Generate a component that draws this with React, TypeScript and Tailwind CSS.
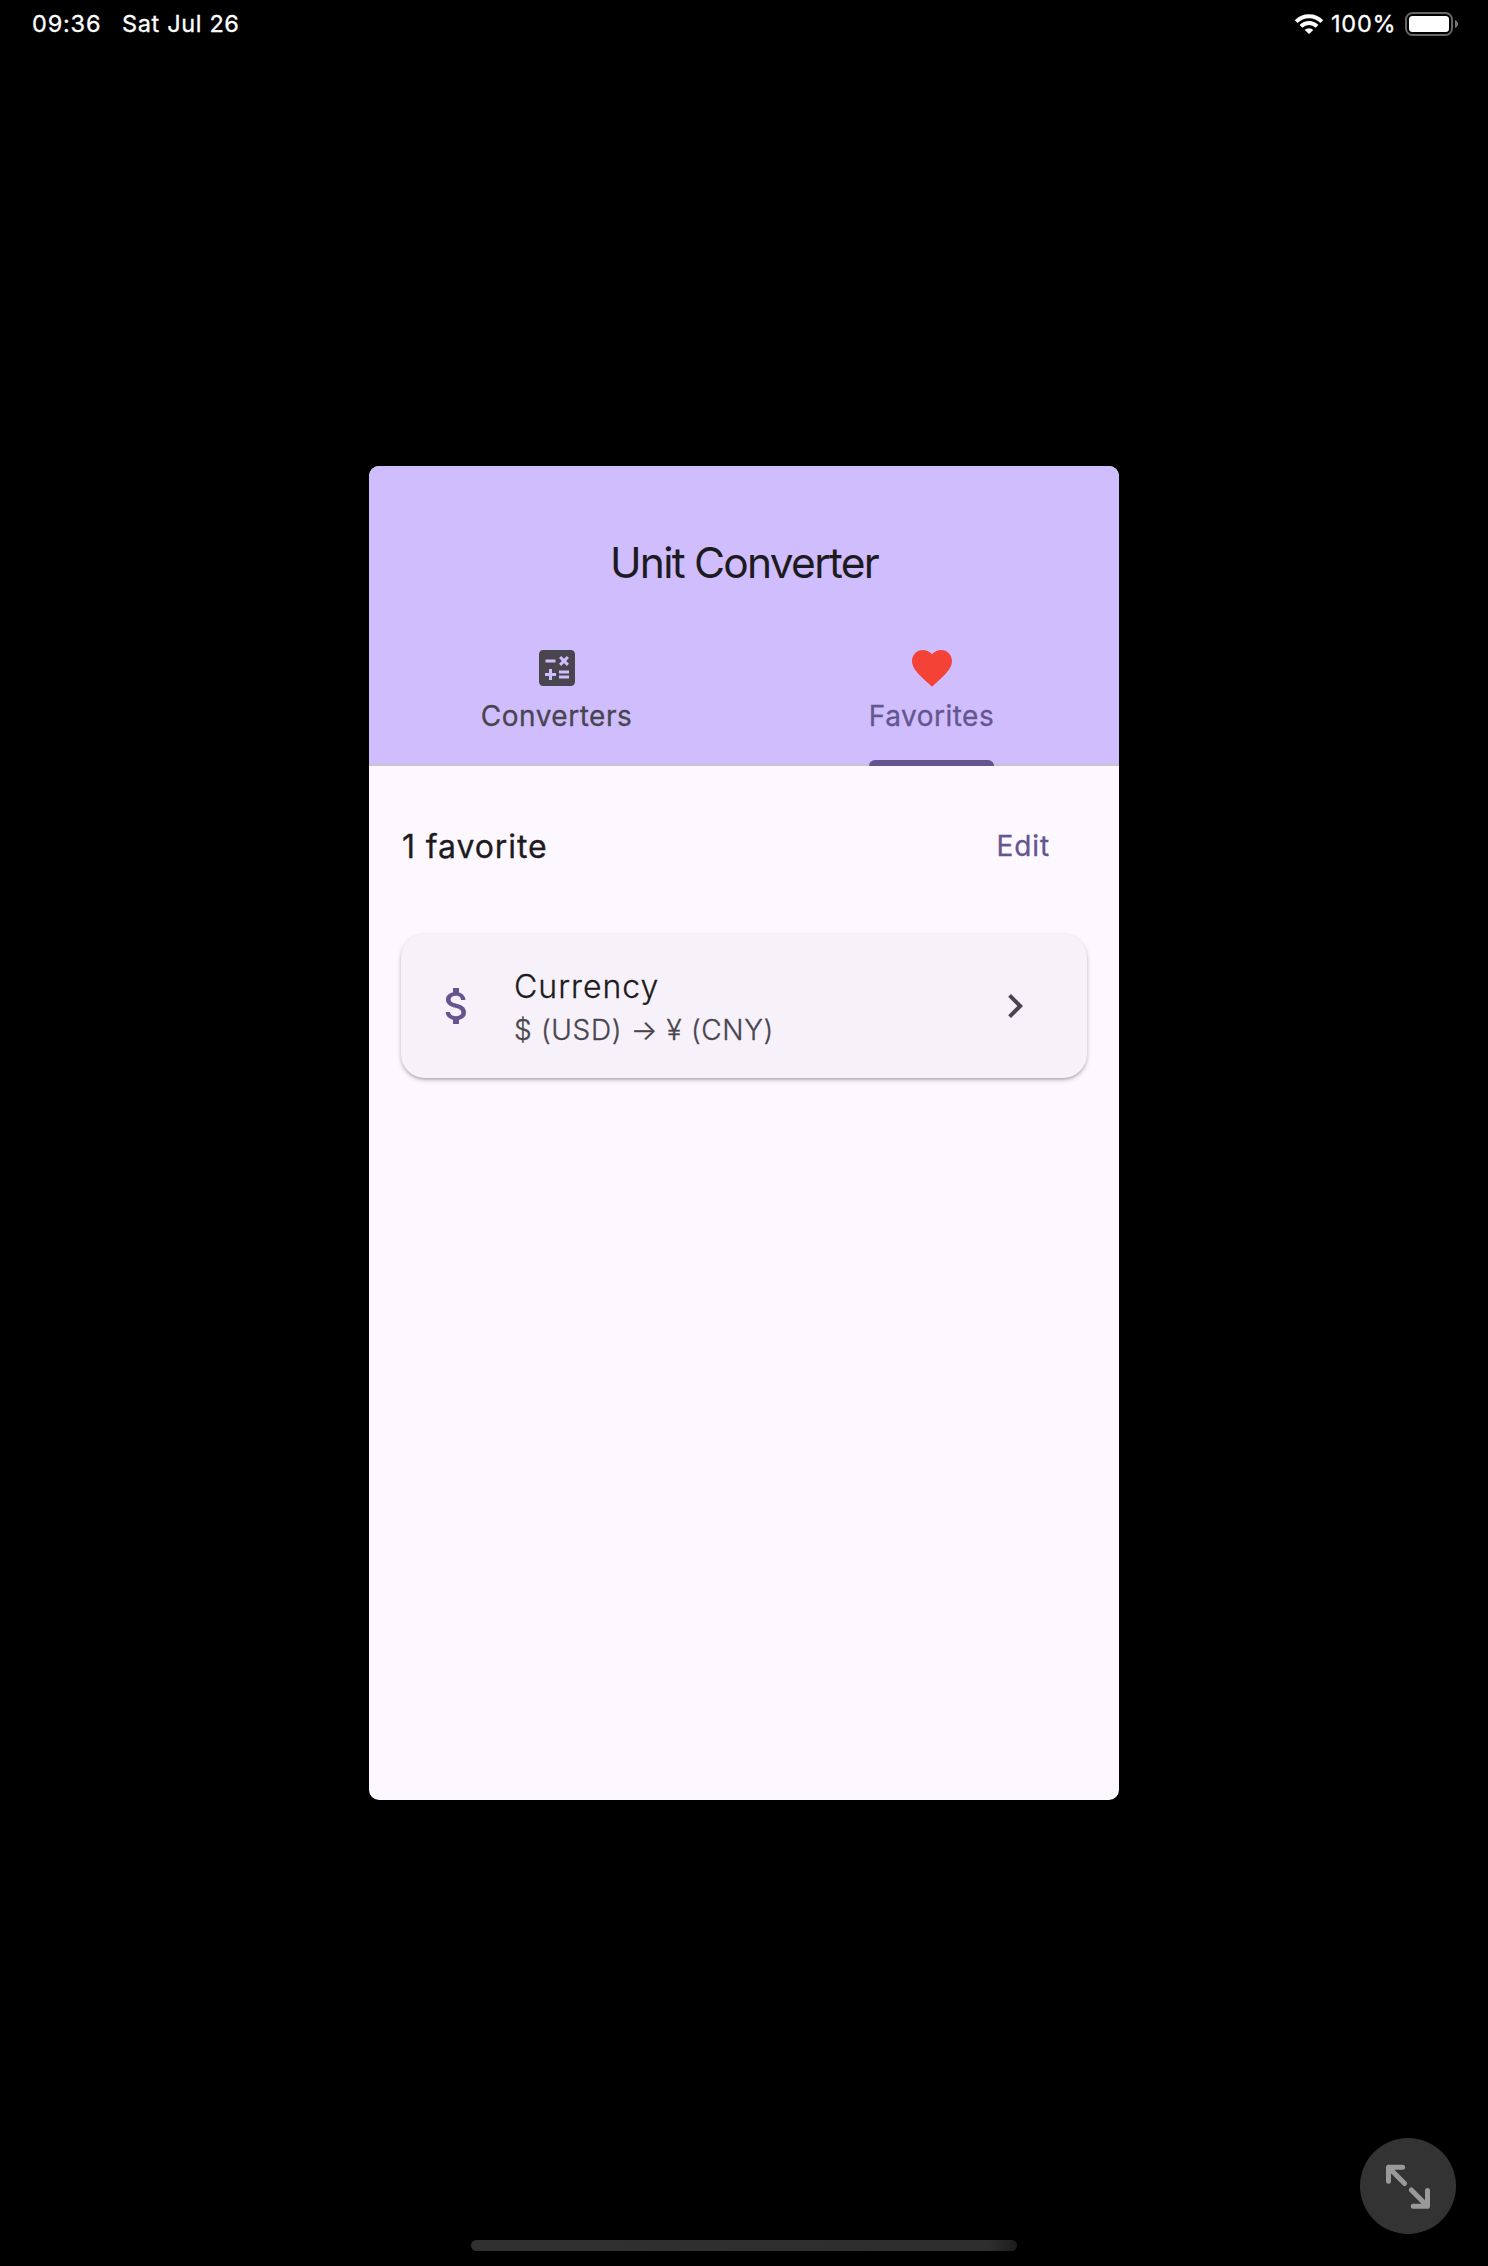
import React from "react";
import { MdAttachMoney, MdCalculate, MdChevronRight, MdFavorite } from "react-icons/md";

function WifiIcon() {
  return (
    <svg className="mt-[13px] h-[22px] w-[30px]" viewBox="0 0 30 22" fill="none" stroke="white" strokeWidth="4">
      <path d="M2.2 8.6 A18.2 18.2 0 0 1 27.8 8.6" />
      <path d="M7 13.4 A11.4 11.4 0 0 1 23 13.4" />
      <path d="M15 21 L10.7 16.9 A6.2 6.2 0 0 1 19.3 16.9 Z" fill="white" stroke="none" />
    </svg>
  );
}

function BatteryIcon() {
  return (
    <svg className="ml-2 mt-3 h-6 w-[53px]" viewBox="0 0 53 24">
      <rect x="1" y="1" width="46" height="22" rx="6.5" fill="none" stroke="#666" strokeWidth="2" />
      <rect x="4" y="4" width="40" height="16" rx="3.5" fill="white" />
      <path d="M50 8 C54 9.5 54 14.5 50 16 Z" fill="#777" />
    </svg>
  );
}

function StatusBar() {
  return (
    <header className="flex h-12 items-start justify-between pl-8 pr-[30px] text-[23.5px] leading-[47px] text-white [-webkit-text-stroke:0.3px]">
      <div className="flex">
        <span className="w-[90px] tracking-[0.8px]">09:36</span>
        <span className="tracking-[0.65px]">Sat Jul 26</span>
      </div>
      <div className="flex items-start">
        <WifiIcon />
        <span className="ml-[7px] w-[66px] whitespace-nowrap tracking-[0.8px]">100%</span>
        <BatteryIcon />
      </div>
    </header>
  );
}

function FavoriteCard() {
  return (
    <div className="mx-8 mt-14 flex h-36 items-center rounded-3xl bg-[#f7f2fa] pl-8 pr-12 shadow-[0_2px_4px_rgba(0,0,0,0.26),0_2px_2px_-1px_rgba(0,0,0,0.12)]">
      <MdAttachMoney className="size-12 text-[#65558f]" />
      <div className="ml-[33px] flex-1 font-light [-webkit-text-stroke:0.3px]">
        <div className="pt-px text-[32px] leading-[47px] tracking-[1px] text-[#1d1b20]">Currency</div>
        <div className="text-[28px] leading-10 tracking-[0.66px] text-[#49454f]">$ (USD) → ¥ (CNY)</div>
      </div>
      <MdChevronRight className="size-12 text-[#49454f]" />
    </div>
  );
}

export default function App() {
  return (
    <div className="flex h-[2266px] w-[1488px] flex-col bg-black font-['Inter',sans-serif]">
      <StatusBar />

      <main className="mx-auto mt-[418px] h-[1334px] w-[750px] overflow-hidden rounded-[10px] bg-[#fdf7ff]">
        <div className="flex h-[300px] flex-col bg-[#cfbdfe] pt-10 shadow-[inset_0_-2px_0_#cac4d0]">
          <h1 className="flex h-28 items-center justify-center pt-px text-[42.5px] font-normal leading-[56px] tracking-[-1.75px] text-[#1d1b20]">
            Unit Converter
          </h1>
          <nav className="grid h-[148px] grid-cols-2 [-webkit-text-stroke:0.3px]">
            <button className="flex flex-col items-center pt-[26px] text-[#49454f]">
              <MdCalculate className="size-12" />
              <span className="mt-1 text-[28px] leading-10 tracking-[0.5px]">Converters</span>
            </button>
            <button className="flex flex-col items-center pt-[26px] text-[#65558f]">
              <MdFavorite className="size-12 text-[#f44336]" />
              <span className="mt-1 text-[28px] leading-10 tracking-[0.5px]">Favorites</span>
              <span className="mt-6 h-1.5 w-[125px] shrink-0 rounded-t-md bg-[#65558f]" />
            </button>
          </nav>
        </div>

        <div className="flex h-28 items-end justify-between pl-[33px] pr-[69px] [-webkit-text-stroke:0.3px]">
          <h2 className="text-[32px] leading-[62px] tracking-[0.9px] text-[#1d1b20]">1 favorite</h2>
          <button className="text-[28px] leading-[63px] tracking-[0.9px] text-[#65558f]">Edit</button>
        </div>
        <FavoriteCard />
      </main>

      <footer className="flex flex-1 flex-col">
        <button className="ml-auto mr-8 mt-[338px] flex size-24 shrink-0 items-center justify-center rounded-full bg-[#333]">
          <svg className="size-12" viewBox="0 0 48 48" fill="none" stroke="#999" strokeWidth="5" strokeLinecap="round" strokeLinejoin="round">
            <path d="M20.6 21.4 L4.5 5.2 M18.6 5.2 H4.5 V19.3" />
            <path d="M27.3 28 L43.5 44.2 M43.5 28.5 V44.2 H29.2" />
          </svg>
        </button>
        <div className="mx-auto mt-1.5 h-[11px] w-[546px] rounded-full bg-linear-to-r from-[#303030] via-[#2e2e2e] via-95% to-[#1c1c1c]" />
      </footer>
    </div>
  );
}
